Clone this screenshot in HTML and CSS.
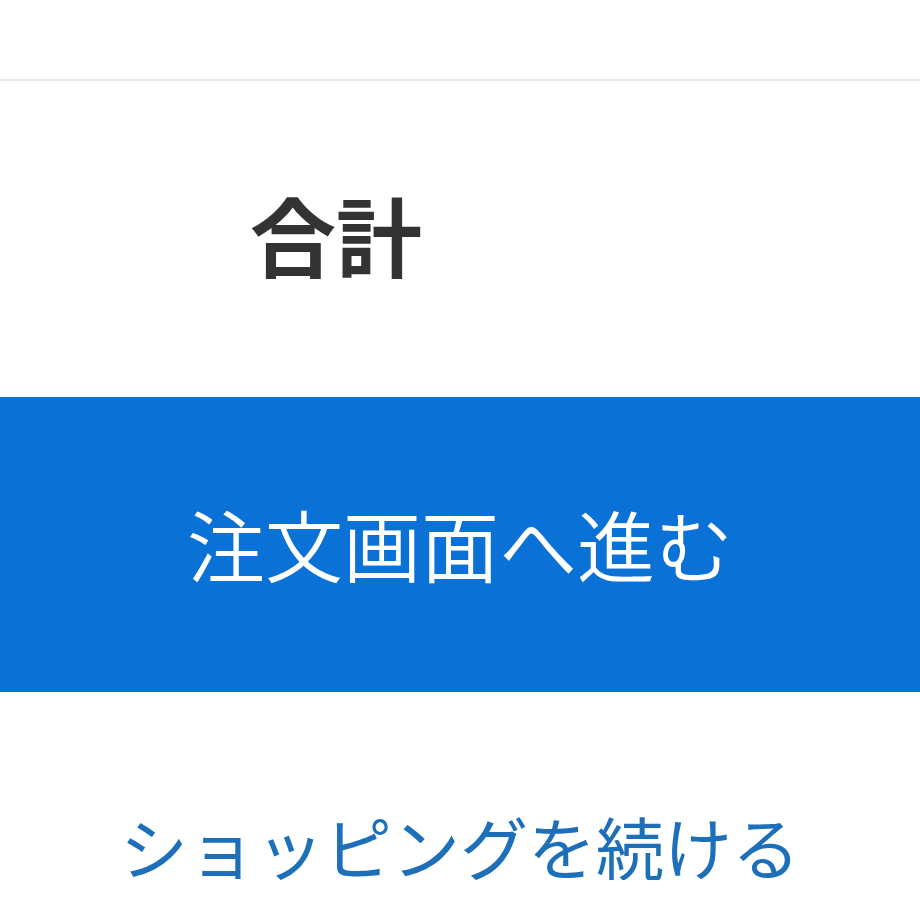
FILE: index.html
```html
<!DOCTYPE html>
<html lang="ja">
<head>
  <meta charset="UTF-8">
  <meta name="viewport" content="width=device-width, initial-scale=1.0">
  <title>カート</title>
  <link rel="stylesheet" href="styles.css">
</head>
<body>
  <div class="header"></div>

  <div class="total">
    <span class="total-label">合計</span>
  </div>

  <button type="button" class="checkout">注文画面へ進む</button>

  <div class="continue">
    <a href="#">ショッピングを続ける</a>
  </div>
</body>
</html>
```

FILE: styles.css
```css
body {
  font-family: "Noto Sans CJK JP", "Noto Sans", sans-serif;
  background-color: #ffffff;
  margin: 0;
  padding: 0;
}
.header {
  height: 79px;
  border-bottom: 2px solid #e8e8e8;
}
.total {
  padding: 110px 0 0 250px;
  height: 211px;
  box-sizing: border-box;
}
.total-label {
  font-size: 86px;
  line-height: 1;
  font-weight: 700;
  color: #333333;
}
.checkout {
  display: block;
  width: 100%;
  height: 295px;
  margin: 105px 0 0;
  padding: 0 0 4px;
  border: none;
  background-color: #0a71d6;
  color: #ffffff;
  font-family: inherit;
  font-size: 78px;
  font-weight: 350;
  cursor: pointer;
}
.continue {
  text-align: center;
  padding-top: 120px;
}
.continue a {
  font-size: 68px;
  font-weight: 400;
  line-height: 1;
  color: #1c6fb8;
  text-decoration: none;
}
```
